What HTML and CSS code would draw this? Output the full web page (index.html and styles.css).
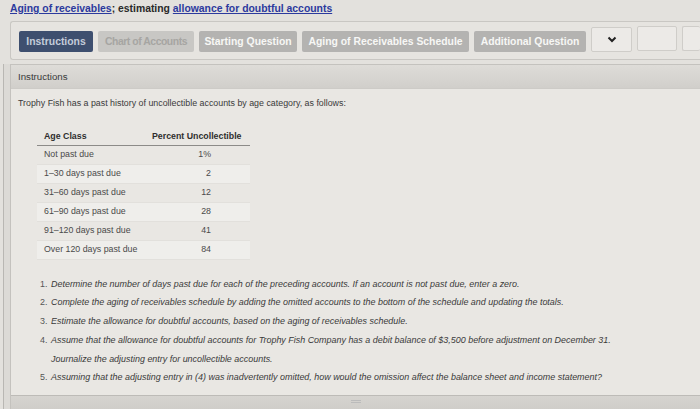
FILE: index.html
```html
<!DOCTYPE html>
<html>
<head>
<meta charset="utf-8">
<link rel="stylesheet" href="styles.css">
</head>
<body>
<div class="page">
  <div class="title"><a class="link">Aging of receivables</a>; estimating <a class="link">allowance for doubtful accounts</a></div>
  <div class="tabbar">
    <div class="tab active">Instructions</div>
    <div class="tab faded">Chart of Accounts</div>
    <div class="tab">Starting Question</div>
    <div class="tab">Aging of Receivables Schedule</div>
    <div class="tab">Additional Question</div>
    <div class="box chev"><svg width="10" height="7" viewBox="0 0 10 7"><path d="M1.5 1.5 L5 5 L8.5 1.5" fill="none" stroke="#222" stroke-width="2"/></svg></div>
    <div class="box wide"></div>
    <div class="box rest"></div>
  </div>
  <div class="main">
    <div class="strip"></div>
    <div class="panel">
      <div class="panel-head">Instructions</div>
      <div class="panel-body">
        <p class="intro">Trophy Fish has a past history of uncollectible accounts by age category, as follows:</p>
        <table class="aging">
          <thead>
            <tr><th class="c1">Age Class</th><th class="c2">Percent Uncollectible</th></tr>
          </thead>
          <tbody>
            <tr><td class="c1">Not past due</td><td class="c2">1%</td></tr>
            <tr><td class="c1">1–30 days past due</td><td class="c2">2</td></tr>
            <tr><td class="c1">31–60 days past due</td><td class="c2">12</td></tr>
            <tr><td class="c1">61–90 days past due</td><td class="c2">28</td></tr>
            <tr><td class="c1">91–120 days past due</td><td class="c2">41</td></tr>
            <tr><td class="c1">Over 120 days past due</td><td class="c2">84</td></tr>
          </tbody>
        </table>
        <ol class="steps">
          <li>Determine the number of days past due for each of the preceding accounts. If an account is not past due, enter a zero.</li>
          <li>Complete the aging of receivables schedule by adding the omitted accounts to the bottom of the schedule and updating the totals.</li>
          <li>Estimate the allowance for doubtful accounts, based on the aging of receivables schedule.</li>
          <li>Assume that the allowance for doubtful accounts for Trophy Fish Company has a debit balance of $3,500 before adjustment on December 31.<br>Journalize the adjusting entry for uncollectible accounts.</li>
          <li>Assuming that the adjusting entry in (4) was inadvertently omitted, how would the omission affect the balance sheet and income statement?</li>
        </ol>
      </div>
      <div class="panel-foot"><span class="grip"></span></div>
    </div>
  </div>
</div>
</body>
</html>
```
FILE: styles.css
```css
* { box-sizing: border-box; }
html, body { margin: 0; padding: 0; }
body {
  width: 700px;
  height: 409px;
  overflow: hidden;
  background: #e3e1dd;
  font-family: "Liberation Sans", Arial, sans-serif;
  color: #3b3b3b;
}
.page { display: flex; flex-direction: column; height: 409px; }
.title {
  padding: 3px 0 0 10px;
  height: 21px;
  font-size: 10.4px;
  font-weight: bold;
  color: #2a2a2a;
}
.link { color: #2c3a9e; text-decoration: underline; }
.tabbar {
  margin-left: 10px;
  height: 39px;
  border: 1px solid #c9c7c3;
  border-right: none;
  border-radius: 3px 0 0 3px;
  background: #e6e4e0;
  display: flex;
  align-items: center;
  gap: 5px;
  padding: 2px 0 0 8px;
}
.tab {
  height: 21px;
  padding: 0 4px;
  display: flex;
  align-items: center;
  justify-content: center;
  background: #b4b3b1;
  color: #f7f7f5;
  font-size: 10.4px;
  font-weight: bold;
  white-space: nowrap;
  border-radius: 2px;
  overflow: hidden;
}
.tab.active { background: #3e4f6f; color: #c4ccda; width: 74px; }
.tab.faded { background: #c8c7c4; color: #a6a5a2; width: 96px; letter-spacing: -0.45px; }
.tab:nth-child(3) { width: 98px; }
.tab:nth-child(4) { width: 167px; }
.tab:nth-child(5) { width: 112px; }
.box {
  height: 25px;
  border: 1px solid #cfcdc9;
  background: #eceae7;
  border-radius: 2px;
  display: flex;
  align-items: center;
  justify-content: center;
}
.chev { width: 41px; margin-top: -4px; }
.wide { width: 40px; margin-top: -6px; }
.rest { flex: 1; margin-top: -6px; border-right: none; }
.main { flex: 1; display: flex; margin-top: 4px; }
.strip {
  width: 10px;
  border-left: 3px solid #e3e1dd;
  background: #dcdad6;
  box-shadow: inset 1px 0 0 #b9b7b3;
}
.panel {
  flex: 1;
  display: flex;
  flex-direction: column;
  border-left: 1px solid #c4c2be;
  border-top: 1px solid #c4c2be;
  background: #e9e7e3;
}
.panel-head {
  height: 24px;
  padding: 6px 0 0 7px;
  font-size: 9.7px;
  color: #3a3a3a;
  background: linear-gradient(#dedcd8, #d1cfcb);
  border-bottom: 1px solid #cdcbc7;
}
.panel-body { flex: 1; padding: 9px 0 0 0; }
.intro { margin: 0 0 0 7px; font-size: 8.85px; color: #3a3a3a; height: 28px; }
.aging {
  margin-left: 26px;
  border-collapse: collapse;
  font-size: 8.8px;
  color: #4a4a4a;
}
.aging th {
  height: 19px;
  font-weight: bold;
  color: #2e2e2e;
  border-bottom: 1.5px solid #8c8b88;
  padding-top: 3px;
}
.aging th.c1 { text-align: left; padding-left: 7px; width: 111px; }
.aging th.c2 { text-align: left; padding-left: 4px; width: 102px; }
.aging td { height: 19px; padding-top: 0; }
.aging td.c1 { padding-left: 7px; }
.aging td.c2 { text-align: right; padding-right: 39px; }
.aging tbody tr:nth-child(even) { background: #efeeeb; }
.aging tbody tr { border-bottom: 1px solid #e2e0dc; }
.steps {
  margin: 15px 0 0 0;
  padding-left: 39px;
  font-size: 8.95px;
  color: #3a3a3a;
}
.steps li { line-height: 18.8px; padding-left: 1px; font-style: italic; }
.steps li::marker { font-style: normal; color: #555; }
.panel-foot {
  height: 14px;
  border-top: 1px solid #bdbbb7;
  background: linear-gradient(#d6d4d0, #cfcdc9);
  display: flex;
  justify-content: center;
  padding-top: 4px;
}
.grip { width: 10px; height: 3px; border-top: 1px solid #bbb; border-bottom: 1px solid #bbb; }
```
